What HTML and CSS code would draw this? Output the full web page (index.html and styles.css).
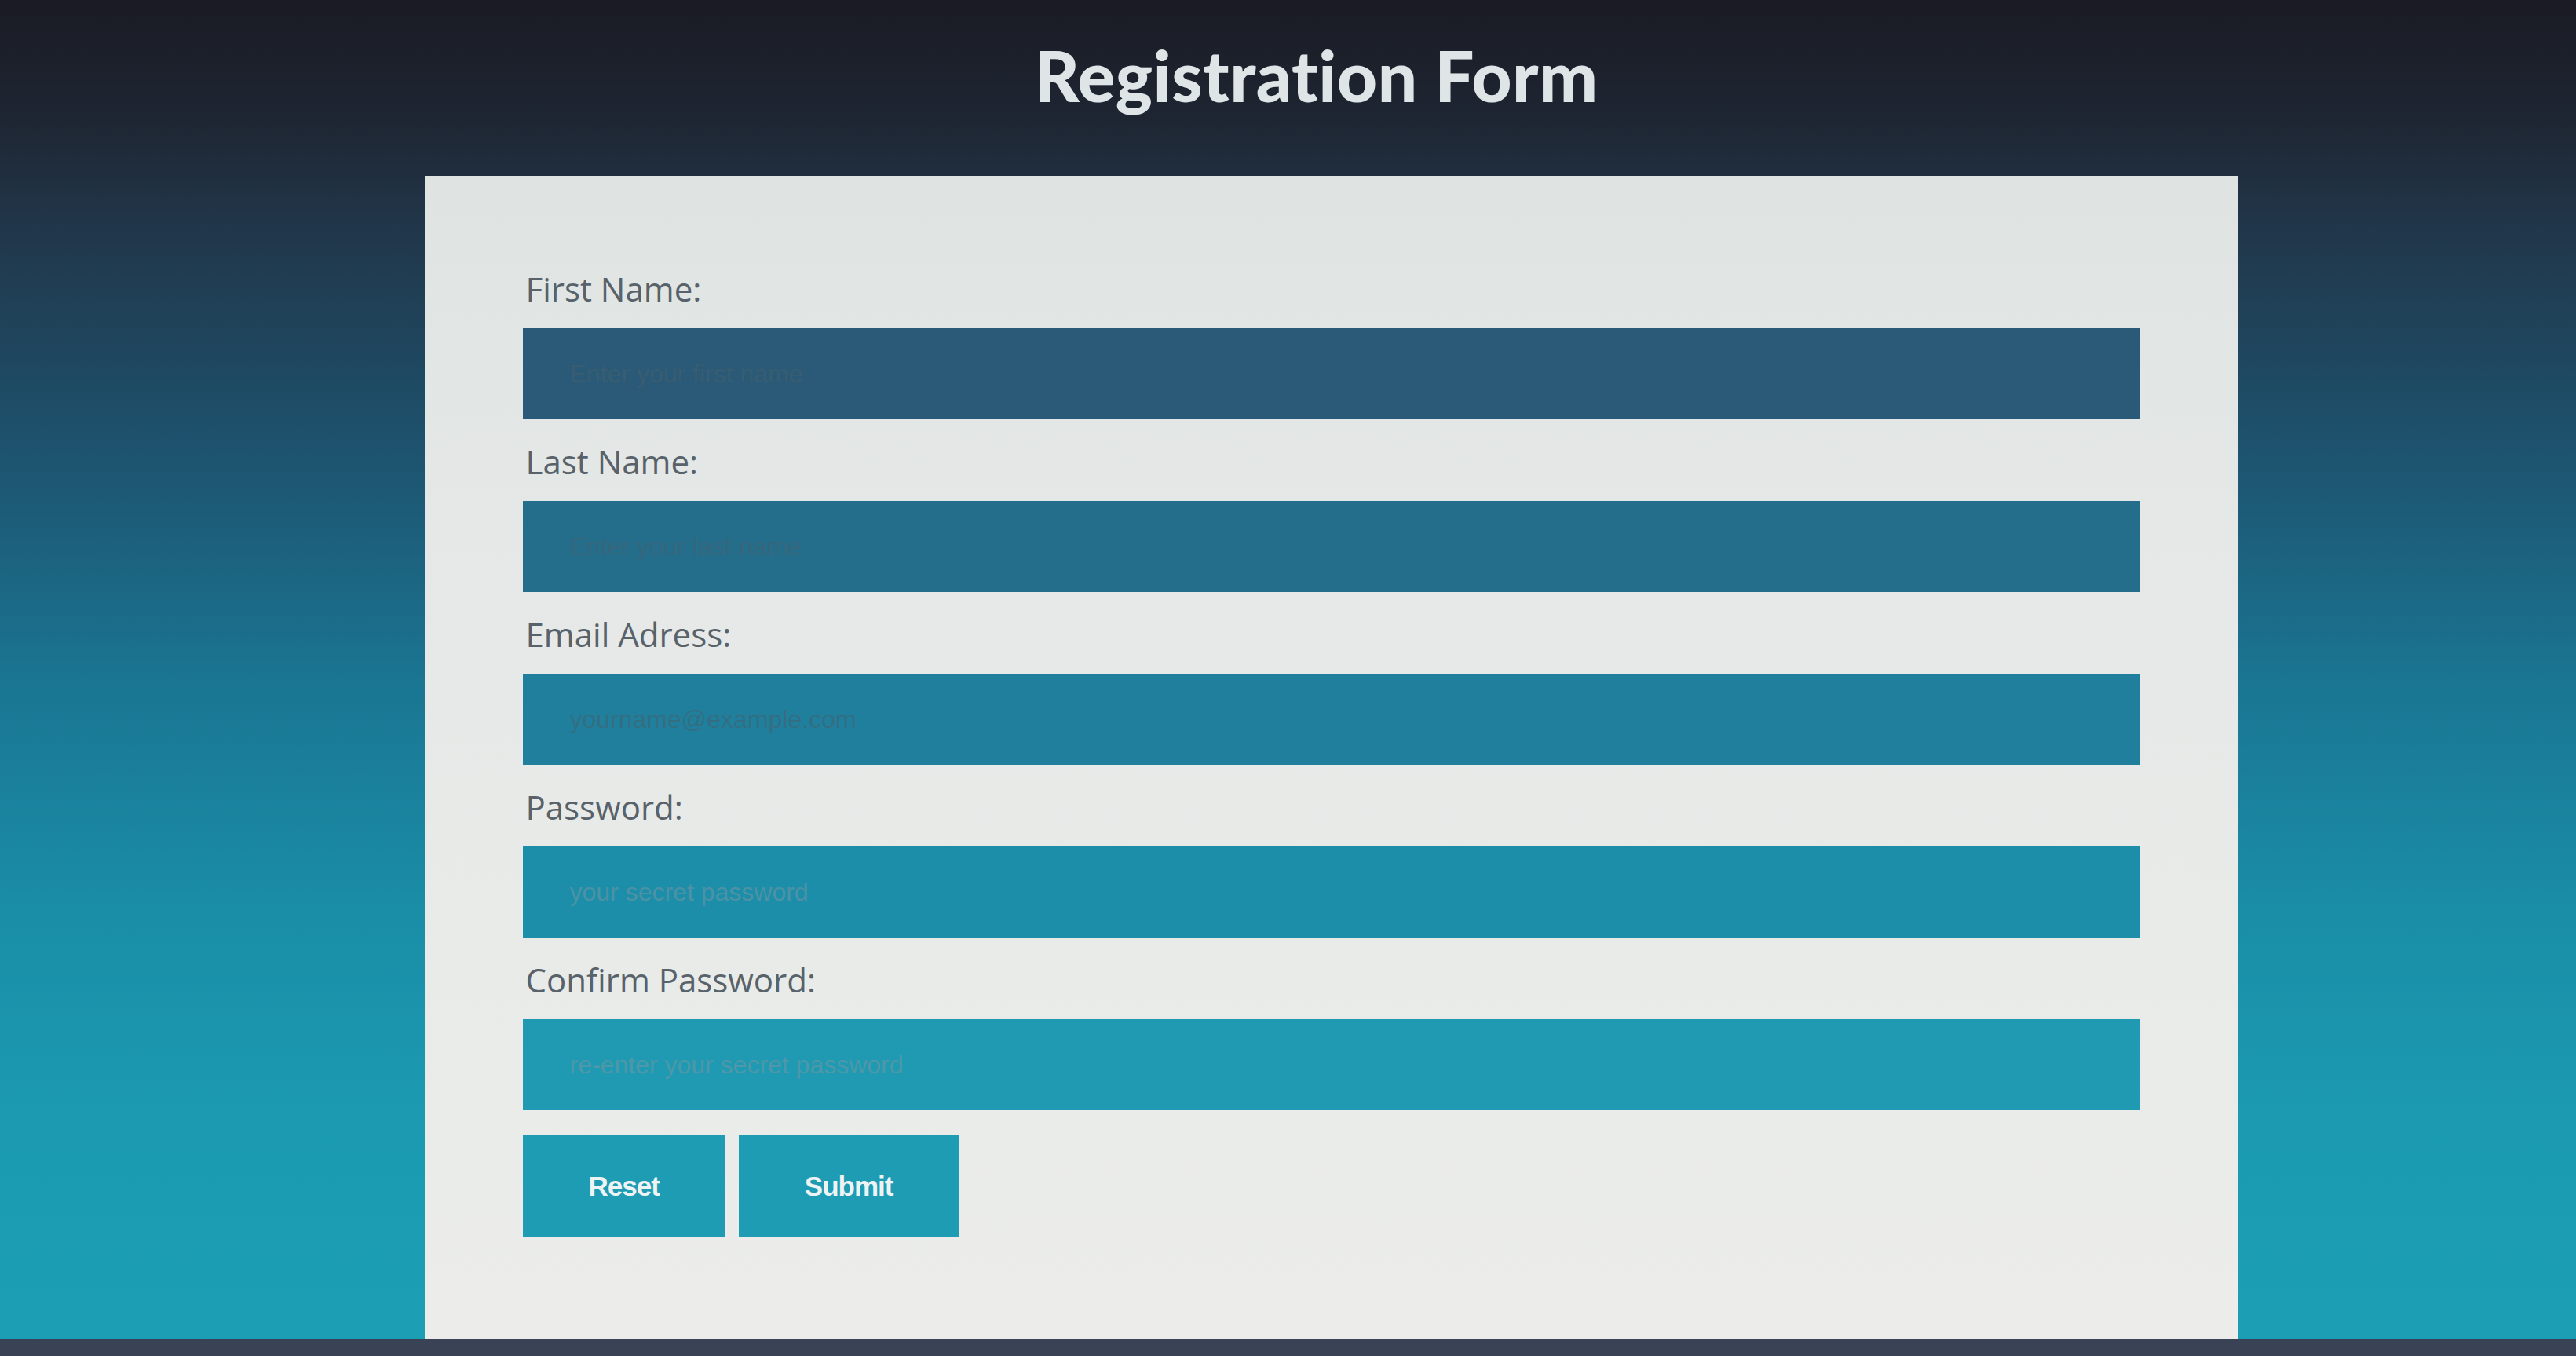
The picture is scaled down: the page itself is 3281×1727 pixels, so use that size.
FILE: index.html
```html
<!DOCTYPE html>
<html lang="en">
<head>
<meta charset="utf-8">
<title>Registration Form</title>
<link rel="stylesheet" href="styles.css">
</head>
<body>
<header class="page-header">
  <h1 class="title">Registration Form</h1>
</header>
<main class="stage">
  <form class="card">
    <div class="field">
      <label class="label" for="fn">First Name:</label>
      <input class="input input-1" id="fn" type="text" placeholder="Enter your first name">
    </div>
    <div class="field">
      <label class="label" for="ln">Last Name:</label>
      <input class="input input-2" id="ln" type="text" placeholder="Enter your last name">
    </div>
    <div class="field">
      <label class="label" for="em">Email Adress:</label>
      <input class="input input-3" id="em" type="email" placeholder="yourname@example.com">
    </div>
    <div class="field">
      <label class="label" for="pw">Password:</label>
      <input class="input input-4" id="pw" type="password" placeholder="your secret password">
    </div>
    <div class="field">
      <label class="label" for="cpw">Confirm Password:</label>
      <input class="input input-5" id="cpw" type="password" placeholder="re-enter your secret password">
    </div>
    <div class="actions">
      <button type="reset" class="btn">Reset</button>
      <button type="submit" class="btn">Submit</button>
    </div>
  </form>
</main>
<div class="bezel"></div>
</body>
</html>
```

FILE: styles.css
```css
html, body {
  margin: 0;
  padding: 0;
  height: 100%;
}

body {
  display: flex;
  flex-direction: column;
  min-height: 100vh;
  overflow: hidden;
  font-family: "Open Sans", "Liberation Sans", sans-serif;
  background: linear-gradient(to bottom,
    #1a1b24 0%,
    #1e2633 9%,
    #213548 16%,
    #1d5470 34%,
    #1a7592 50%,
    #1a8ca6 66%,
    #1b9ab1 82%,
    #1c9fb5 100%);
}

.page-header {
  height: 224px;
  flex: 0 0 224px;
  display: flex;
  justify-content: center;
  padding-left: 72px;
  box-sizing: border-box;
}

.title {
  margin: 0;
  padding-top: 44px;
  font-family: "Lato", "Open Sans", sans-serif;
  font-weight: 900;
  font-size: 89px;
  line-height: 104px;
  color: #dfe5e7;
  letter-spacing: 0.5px;
}

.stage {
  flex: 1;
  display: flex;
  justify-content: center;
  padding-left: 110px;
}

.card {
  width: 2310px;
  box-sizing: border-box;
  padding: 118px 125px 0 125px;
  background: linear-gradient(to bottom, #dfe4e3 0%, #e6e9e7 40%, #ecedeb 100%);
}

.field {
  display: flex;
  flex-direction: column;
  margin-bottom: 28px;
}

.label {
  font-family: "Open Sans", "Liberation Sans", sans-serif;
  font-size: 42px;
  line-height: 52px;
  color: #58626a;
  margin-bottom: 24px;
  padding-left: 4px;
}

.input {
  display: block;
  width: 100%;
  height: 116px;
  box-sizing: border-box;
  border: none;
  outline: none;
  padding: 0 60px;
  font-family: "Liberation Sans", Arial, sans-serif;
  font-size: 32px;
  color: #ffffff;
}

.input::placeholder {
  color: rgba(70, 95, 108, 0.55);
}

.input-1 { background: #2a5a77; }
.input-2 { background: #246e8c; }
.input-3 { background: #1f7f9d; }
.input-4 { background: #1d8eaa; }
.input-5 { background: #1f9ab2; }

.input-4::placeholder,
.input-5::placeholder {
  color: rgba(120, 150, 160, 0.55);
}

.actions {
  display: flex;
  gap: 17px;
  padding-top: 4px;
}

.btn {
  height: 130px;
  padding: 0 84px;
  border: none;
  background: #1e9cb4;
  color: #eef3f4;
  font-family: "Liberation Sans", Arial, sans-serif;
  font-weight: 700;
  font-size: 35px;
  letter-spacing: -1px;
  cursor: pointer;
}

.bezel {
  flex: 0 0 22px;
  height: 22px;
  background: #3a4255;
}
```
